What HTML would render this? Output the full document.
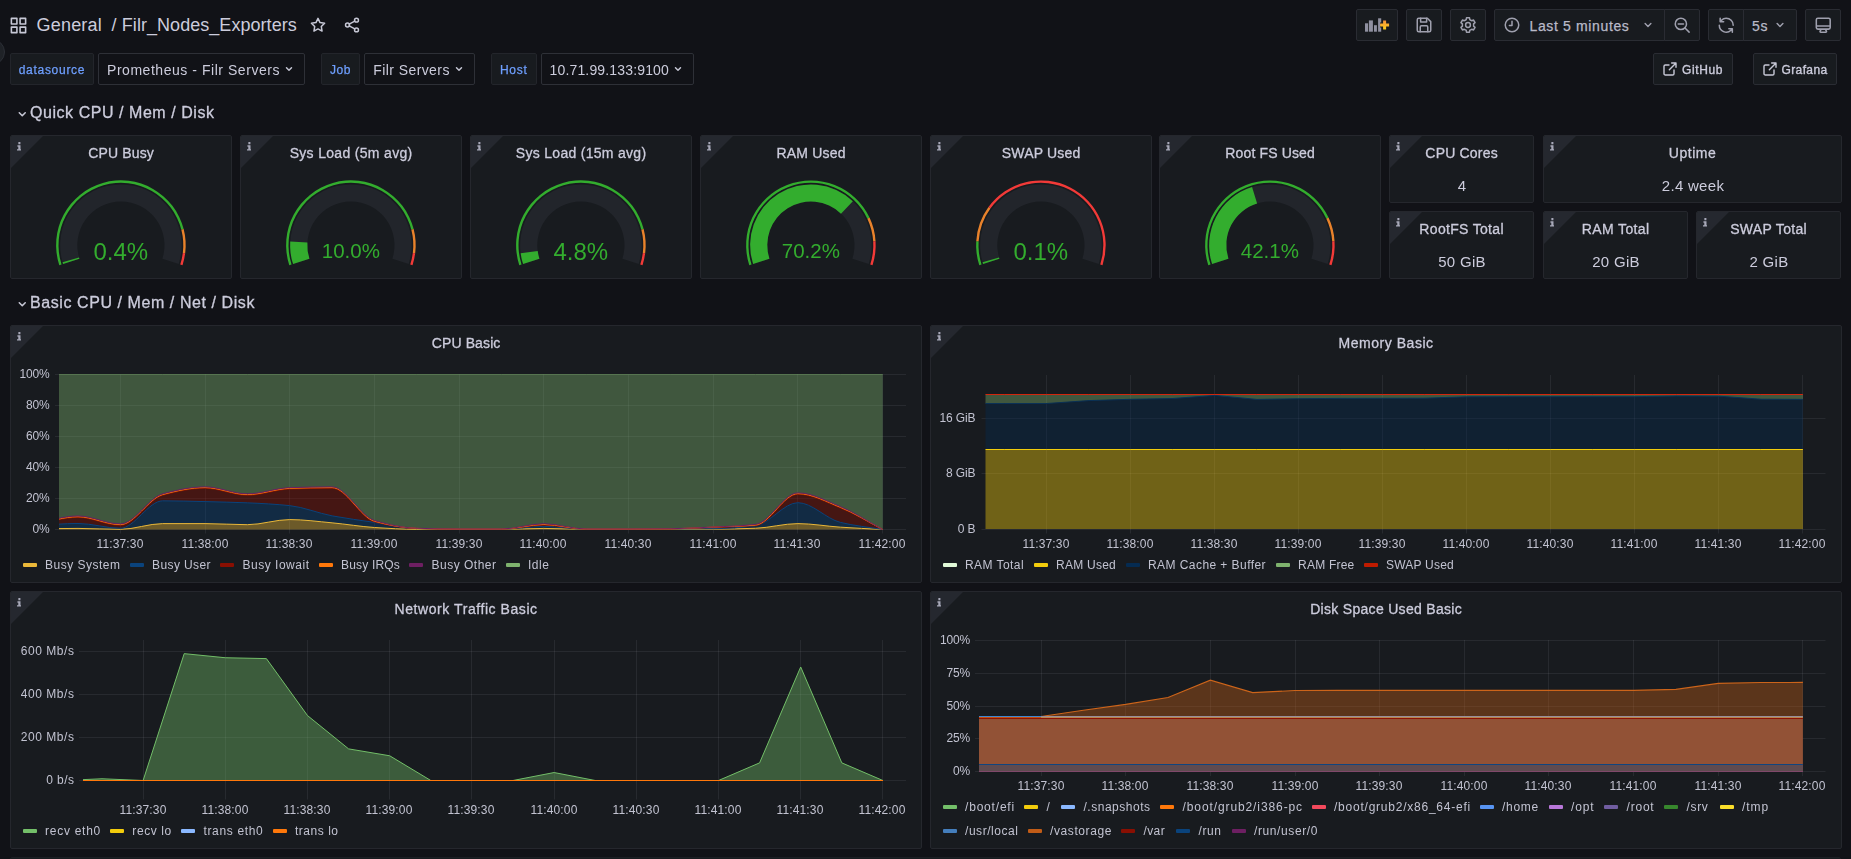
<!DOCTYPE html>
<html lang="en"><head><meta charset="utf-8"><title>Filr_Nodes_Exporters - Grafana</title>
<style>

html,body{margin:0;padding:0}
body{width:1851px;height:859px;overflow:hidden;background:#111217;position:relative;
 font-family:"Liberation Sans",sans-serif;color:#ccccdc;-webkit-font-smoothing:antialiased}
.t{position:absolute;white-space:nowrap;display:block}
.ic{position:absolute;display:block;overflow:visible}
.panel{position:absolute;box-sizing:border-box;background:#181b1f;border:1px solid #25272d;border-radius:2px;overflow:hidden}
.panel svg.plot{position:absolute;left:-1px;top:-1px;display:block}
.corner{position:absolute;left:-1px;top:-1px;width:0;height:0;border-top:34px solid #25282f;border-right:34px solid transparent}
.ci{position:absolute;left:5.600px;top:6.300px;fill:#a8a9b9}
.btn{position:absolute;box-sizing:border-box;background:#181b1f;border:1px solid #2a2c33;border-radius:2px}
.sel{position:absolute;box-sizing:border-box;background:#111217;border:1px solid #2e3037;border-radius:2px}
.lbl{position:absolute;box-sizing:border-box;background:#181b1f;border:1px solid #23252b;border-radius:2px}
.sw{position:absolute;width:14px;height:4px;border-radius:1px}

</style></head><body>
<div style="position:absolute;left:-20.800px;top:39px;width:26px;height:26px;border-radius:50%;box-sizing:border-box;background:#1f2227;border:1px solid #2c2f36"></div>
<div id="nav">
<svg class="ic" style="left:9.40px;top:15.50px" width="19" height="19" viewBox="0 0 24 24" fill="#c7c8d6"><path d="M10,13H3a1,1,0,0,0-1,1v7a1,1,0,0,0,1,1h7a1,1,0,0,0,1-1V14A1,1,0,0,0,10,13ZM9,20H4V15H9ZM21,2H14a1,1,0,0,0-1,1v7a1,1,0,0,0,1,1h7a1,1,0,0,0,1-1V3A1,1,0,0,0,21,2ZM20,9H15V4h5Zm1,4H14a1,1,0,0,0-1,1v7a1,1,0,0,0,1,1h7a1,1,0,0,0,1-1V14A1,1,0,0,0,21,13Zm-1,7H15V15h5ZM10,2H3A1,1,0,0,0,2,3v7a1,1,0,0,0,1,1h7a1,1,0,0,0,1-1V3A1,1,0,0,0,10,2ZM9,9H4V4H9Z"/></svg>
<span class="t" style="left:36.50px;top:13.00px;font-size:18px;line-height:24px;letter-spacing:0.209px;color:#ccccdc;">General</span>
<span class="t" style="left:111.50px;top:13.00px;font-size:18px;line-height:24px;letter-spacing:0.999px;color:#ccccdc;">/</span>
<span class="t" style="left:121.80px;top:13.00px;font-size:18px;line-height:24px;letter-spacing:0.047px;color:#ccccdc;">Filr_Nodes_Exporters</span>
<svg class="ic" style="left:309.10px;top:16.00px" width="18" height="18" viewBox="0 0 24 24" fill="none" stroke="#c7c8d6" stroke-width="2" stroke-linecap="round" stroke-linejoin="round" ><path d="M12 3.2l2.7 5.6 6.1.9-4.4 4.3 1 6.1-5.4-2.9-5.4 2.9 1-6.1-4.4-4.3 6.1-.9z"/></svg>
<svg class="ic" style="left:343.20px;top:16.00px" width="18" height="18" viewBox="0 0 24 24" fill="none" stroke="#c7c8d6" stroke-width="2" stroke-linecap="round" stroke-linejoin="round" ><circle cx="18" cy="5.5" r="2.6"/><circle cx="6" cy="12" r="2.6"/><circle cx="18" cy="18.5" r="2.6"/><path d="M8.3 10.8l7.4-4M8.3 13.2l7.4 4"/></svg>
<div class="btn" style="left:1356px;top:9px;width:42px;height:32px;"></div>
<div class="btn" style="left:1406px;top:9px;width:36px;height:32px;"></div>
<div class="btn" style="left:1450px;top:9px;width:36px;height:32px;"></div>
<div class="btn" style="left:1494px;top:9px;width:171px;height:32px;border-radius:2px 0 0 2px"></div>
<div class="btn" style="left:1664px;top:9px;width:36px;height:32px;border-radius:0 2px 2px 0"></div>
<div class="btn" style="left:1708px;top:9px;width:36px;height:32px;border-radius:2px 0 0 2px"></div>
<div class="btn" style="left:1743px;top:9px;width:54px;height:32px;border-radius:0 2px 2px 0"></div>
<div class="btn" style="left:1805px;top:9px;width:36px;height:32px;"></div>
<svg class="ic" style="left:1356px;top:9px" width="42" height="32" viewBox="1356 9 42 32"><defs><linearGradient id="plusg" x1="0" y1="0" x2="0" y2="1"><stop offset="0" stop-color="#f5903c"/><stop offset="1" stop-color="#fdd01c"/></linearGradient></defs><g fill="#8f90a0"><rect x="1365" y="23.300" width="3.100" height="8.400"/><rect x="1368.900" y="20.400" width="4" height="11.300"/><rect x="1374" y="25.200" width="2.900" height="6.500"/><rect x="1378.100" y="18.300" width="3.100" height="13.400"/></g><path d="M1384.600 20.400v9M1380.100 24.900h9" stroke="#181b1f" stroke-width="5" fill="none"/><path d="M1383.100 20.400h3v3h3v3h-3v3h-3v-3h-3v-3h3z" fill="url(#plusg)"/></svg>
<svg class="ic" style="left:1415.10px;top:16.20px" width="18" height="18" viewBox="0 0 24 24" fill="none" stroke="#9fa0ae" stroke-width="2" stroke-linecap="round" stroke-linejoin="round" ><path d="M5 3h11.5L21 7.5V19a2 2 0 0 1-2 2H5a2 2 0 0 1-2-2V5a2 2 0 0 1 2-2z"/><path d="M7.5 3v5h8V3M7 21v-6.5a1.5 1.5 0 0 1 1.5-1.5h7a1.5 1.5 0 0 1 1.5 1.5V21"/></svg>
<svg class="ic" style="left:1459.00px;top:16.10px" width="18" height="18" viewBox="0 0 24 24" fill="none" stroke="#9fa0ae" stroke-width="2" stroke-linecap="round" stroke-linejoin="round" ><circle cx="12" cy="12" r="3.2"/><path d="M19.4 13.5a7.6 7.6 0 0 0 0-3l2-1.6-2-3.5-2.4 1a7.6 7.6 0 0 0-2.6-1.5L14 2.4h-4l-.4 2.5A7.6 7.6 0 0 0 7 6.4l-2.4-1-2 3.5 2 1.6a7.6 7.6 0 0 0 0 3l-2 1.6 2 3.5 2.4-1a7.6 7.6 0 0 0 2.600 1.5l.4 2.5h4l.4-2.5a7.6 7.6 0 0 0 2.600-1.5l2.4 1 2-3.500z"/></svg>
<svg class="ic" style="left:1502.90px;top:16.00px" width="18" height="18" viewBox="0 0 24 24" fill="none" stroke="#9fa0ae" stroke-width="2" stroke-linecap="round" stroke-linejoin="round" ><circle cx="12" cy="12" r="9"/><path d="M12 7v5.5H8.500"/></svg>
<span class="t" style="left:1529.50px;top:16.50px;font-size:14px;line-height:18px;letter-spacing:0.639px;color:#b9bac8;-webkit-text-stroke:0.250px #b9bac8;">Last 5 minutes</span>
<svg class="ic" style="left:1639.90px;top:17.10px" width="16" height="16" viewBox="0 0 24 24" fill="none" stroke="#9fa0ae" stroke-width="2.2" stroke-linecap="round" stroke-linejoin="round" ><path d="M7.700 9.900l4.300 4.200 4.300-4.200"/></svg>
<svg class="ic" style="left:1673.00px;top:16.00px" width="18" height="18" viewBox="0 0 24 24" fill="none" stroke="#9fa0ae" stroke-width="2" stroke-linecap="round" stroke-linejoin="round" ><circle cx="10.5" cy="10.5" r="7.5"/><path d="M16 16l5.500 5.500M7 10.500h7"/></svg>
<svg class="ic" style="left:1716.65px;top:15.55px" width="18.5" height="18.5" viewBox="0 0 24 24" fill="#9fa0ae"><path d="M19.91,15.51H15.38a1,1,0,0,0,0,2h2.4A8,8,0,0,1,4,12a1,1,0,0,0-2,0,10,10,0,0,0,16.88,7.23V21a1,1,0,0,0,2,0V16.5A1,1,0,0,0,19.91,15.51ZM12,2A10,10,0,0,0,5.120,4.770V3a1,1,0,0,0-2,0V7.500a1,1,0,0,0,1,1h4.500a1,1,0,0,0,0-2H6.220A8,8,0,0,1,20,12a1,1,0,0,0,2,0A10,10,0,0,0,12,2Z"/></svg>
<span class="t" style="left:1752.00px;top:16.50px;font-size:14px;line-height:18px;letter-spacing:0.607px;color:#b9bac8;-webkit-text-stroke:0.250px #b9bac8;">5s</span>
<svg class="ic" style="left:1772.20px;top:17.10px" width="16" height="16" viewBox="0 0 24 24" fill="none" stroke="#9fa0ae" stroke-width="2.2" stroke-linecap="round" stroke-linejoin="round" ><path d="M7.700 9.900l4.300 4.200 4.300-4.200"/></svg>
<svg class="ic" style="left:1813.75px;top:15.55px" width="18.5" height="18.5" viewBox="0 0 24 24" fill="#9fa0ae"><path d="M19,2H5A3,3,0,0,0,2,5V15a3,3,0,0,0,3,3H7.640l-.580,1a2,2,0,0,0,0,2,2,2,0,0,0,1.750,1h6.460A2,2,0,0,0,17,21a2,2,0,0,0,0-2l-.590-1H19a3,3,0,0,0,3-3V5A3,3,0,0,0,19,2ZM8.770,20,9.910,18h4.170l1.150,2ZM20,15a1,1,0,0,1-1,1H5a1,1,0,0,1-1-1V14H20Zm0-3H4V5A1,1,0,0,1,5,4H19a1,1,0,0,1,1,1Z"/></svg>
</div>
<div id="app" style="position:absolute;left:0;top:0;width:1851px;height:859px;will-change:transform">
<div id="submenu">
<div class="lbl" style="left:10px;top:53px;width:84px;height:32px;"></div>
<span class="t" style="left:18.70px;top:61.50px;font-size:12px;line-height:16px;letter-spacing:0.713px;color:#6e9fff;-webkit-text-stroke:0.250px #6e9fff;">datasource</span>
<div class="sel" style="left:98px;top:53px;width:207px;height:32px;"></div>
<span class="t" style="left:107.00px;top:60.50px;font-size:14px;line-height:18px;letter-spacing:0.541px;color:#ccccdc;">Prometheus - Filr Servers</span>
<svg class="ic" style="left:282.10px;top:62.20px" width="14" height="14" viewBox="0 0 24 24" fill="none" stroke="#c7c8d6" stroke-width="2.5" stroke-linecap="round" stroke-linejoin="round" ><path d="M7.700 9.900l4.300 4.200 4.300-4.200"/></svg>
<div class="lbl" style="left:321px;top:53px;width:39px;height:32px;"></div>
<span class="t" style="left:330.00px;top:61.50px;font-size:12px;line-height:16px;letter-spacing:0.551px;color:#6e9fff;-webkit-text-stroke:0.250px #6e9fff;">Job</span>
<div class="sel" style="left:364px;top:53px;width:111px;height:32px;"></div>
<span class="t" style="left:373.30px;top:60.50px;font-size:14px;line-height:18px;letter-spacing:0.412px;color:#ccccdc;">Filr Servers</span>
<svg class="ic" style="left:452.00px;top:62.20px" width="14" height="14" viewBox="0 0 24 24" fill="none" stroke="#c7c8d6" stroke-width="2.5" stroke-linecap="round" stroke-linejoin="round" ><path d="M7.700 9.900l4.300 4.200 4.300-4.200"/></svg>
<div class="lbl" style="left:491px;top:53px;width:46px;height:32px;"></div>
<span class="t" style="left:500.00px;top:61.50px;font-size:12px;line-height:16px;letter-spacing:0.707px;color:#6e9fff;-webkit-text-stroke:0.250px #6e9fff;">Host</span>
<div class="sel" style="left:541px;top:53px;width:153px;height:32px;"></div>
<span class="t" style="left:549.50px;top:60.50px;font-size:14px;line-height:18px;letter-spacing:0.160px;color:#ccccdc;">10.71.99.133:9100</span>
<svg class="ic" style="left:671.00px;top:62.20px" width="14" height="14" viewBox="0 0 24 24" fill="none" stroke="#c7c8d6" stroke-width="2.5" stroke-linecap="round" stroke-linejoin="round" ><path d="M7.700 9.900l4.300 4.200 4.300-4.200"/></svg>
</div>
<div id="links">
<div class="btn" style="left:1653px;top:53px;width:80px;height:32px;"></div>
<svg class="ic" style="left:1662.00px;top:60.90px" width="16" height="16" viewBox="0 0 24 24" fill="none" stroke="#c7c8d6" stroke-width="2.1" stroke-linecap="round" stroke-linejoin="round" ><path d="M18 13.500V19a2 2 0 0 1-2 2H5a2 2 0 0 1-2-2V8a2 2 0 0 1 2-2h5.500"/><path d="M14.500 3H21v6.500M21 3l-10 10"/></svg>
<span class="t" style="left:1682.00px;top:61.50px;font-size:12px;line-height:16px;letter-spacing:0.609px;color:#ccccdc;-webkit-text-stroke:0.350px #ccccdc;">GitHub</span>
<div class="btn" style="left:1753px;top:53px;width:84px;height:32px;"></div>
<svg class="ic" style="left:1762.00px;top:60.90px" width="16" height="16" viewBox="0 0 24 24" fill="none" stroke="#c7c8d6" stroke-width="2.1" stroke-linecap="round" stroke-linejoin="round" ><path d="M18 13.500V19a2 2 0 0 1-2 2H5a2 2 0 0 1-2-2V8a2 2 0 0 1 2-2h5.500"/><path d="M14.500 3H21v6.500M21 3l-10 10"/></svg>
<span class="t" style="left:1781.50px;top:61.50px;font-size:12px;line-height:16px;letter-spacing:0.377px;color:#ccccdc;-webkit-text-stroke:0.350px #ccccdc;">Grafana</span>
</div>
<svg class="ic" style="left:13.75px;top:105.75px" width="16.5" height="16.5" viewBox="0 0 24 24" fill="none" stroke="#c7c8d6" stroke-width="2.3" stroke-linecap="round" stroke-linejoin="round" ><path d="M7.700 9.900l4.300 4.200 4.300-4.200"/></svg>
<span class="t" style="left:30.00px;top:102.40px;font-size:16px;line-height:22px;letter-spacing:0.547px;color:#ccccdc;-webkit-text-stroke:0.300px #ccccdc;">Quick CPU / Mem / Disk</span>
<svg class="ic" style="left:13.75px;top:295.75px" width="16.5" height="16.5" viewBox="0 0 24 24" fill="none" stroke="#c7c8d6" stroke-width="2.3" stroke-linecap="round" stroke-linejoin="round" ><path d="M7.700 9.900l4.300 4.200 4.300-4.200"/></svg>
<span class="t" style="left:30.00px;top:292.40px;font-size:16px;line-height:22px;letter-spacing:0.574px;color:#ccccdc;-webkit-text-stroke:0.300px #ccccdc;">Basic CPU / Mem / Net / Disk</span>
<div class="panel" style="left:10.00px;top:135px;width:222.00px;height:144px"><div class="corner"></div><svg class="ci" width="4.700" height="8.600" viewBox="0 0 5.500 8.800" preserveAspectRatio="none"><path d="M1.600 0h2.400v2.200h-2.400zM.500 3.300h3.600v4h1.400v1.500h-5.500v-1.500h1.500v-2.500h-1z"/></svg><span class="t" style="left:77.15px;top:8.30px;font-size:14px;line-height:18px;letter-spacing:0.166px;color:#ccccdc;-webkit-text-stroke:0.300px #ccccdc;">CPU Busy</span><svg class="plot" width="222.00" height="144" viewBox="10.00 135 222.00 144"><path d="M63.08,263.99 A60.8,60.8 0 1 1 178.72,263.99 L162.37,258.67 A43.6,43.6 0 1 0 79.43,258.67Z" fill="#22252b"/><path d="M59.27,265.22 A64.8,64.8 0 1 1 183.66,229.08 L181.34,229.68 A62.4,62.4 0 1 0 61.55,264.48Z" fill="#33ad2e"/><path d="M183.66,229.08 A64.8,64.8 0 0 1 185.19,253.32 L182.81,253.02 A62.4,62.4 0 0 0 181.34,229.68Z" fill="#e8822b"/><path d="M185.19,253.32 A64.8,64.8 0 0 1 182.53,265.22 L180.25,264.48 A62.4,62.4 0 0 0 182.81,253.02Z" fill="#f23a38"/><path d="M63.08,263.99 A60.8,60.8 0 0 1 62.54,262.24 L79.05,257.42 A43.6,43.6 0 0 0 79.43,258.67Z" fill="#33ad2e"/></svg><span class="t" style="left:82.45px;top:99.60px;font-size:24px;line-height:32px;letter-spacing:0.000px;color:#33ad2e;">0.4%</span></div>
<div class="panel" style="left:240.00px;top:135px;width:222.00px;height:144px"><div class="corner"></div><svg class="ci" width="4.700" height="8.600" viewBox="0 0 5.500 8.800" preserveAspectRatio="none"><path d="M1.600 0h2.400v2.200h-2.400zM.500 3.300h3.600v4h1.400v1.500h-5.500v-1.500h1.500v-2.500h-1z"/></svg><span class="t" style="left:48.65px;top:8.30px;font-size:14px;line-height:18px;letter-spacing:0.318px;color:#ccccdc;-webkit-text-stroke:0.300px #ccccdc;">Sys Load (5m avg)</span><svg class="plot" width="222.00" height="144" viewBox="240.00 135 222.00 144"><path d="M293.08,263.99 A60.8,60.8 0 1 1 408.72,263.99 L392.37,258.67 A43.6,43.6 0 1 0 309.43,258.67Z" fill="#22252b"/><path d="M289.27,265.22 A64.8,64.8 0 1 1 413.66,229.08 L411.34,229.68 A62.4,62.4 0 1 0 291.55,264.48Z" fill="#33ad2e"/><path d="M413.66,229.08 A64.8,64.8 0 0 1 415.19,253.32 L412.81,253.02 A62.4,62.4 0 0 0 411.34,229.68Z" fill="#e8822b"/><path d="M415.19,253.32 A64.8,64.8 0 0 1 412.53,265.22 L410.25,264.48 A62.4,62.4 0 0 0 412.81,253.02Z" fill="#f23a38"/><path d="M293.08,263.99 A60.8,60.8 0 0 1 290.22,241.38 L307.39,242.46 A43.6,43.6 0 0 0 309.43,258.67Z" fill="#33ad2e"/></svg><span class="t" style="left:80.74px;top:100.70px;font-size:20.5px;line-height:28px;letter-spacing:0.000px;color:#33ad2e;">10.0%</span></div>
<div class="panel" style="left:470.00px;top:135px;width:222.00px;height:144px"><div class="corner"></div><svg class="ci" width="4.700" height="8.600" viewBox="0 0 5.500 8.800" preserveAspectRatio="none"><path d="M1.600 0h2.400v2.200h-2.400zM.500 3.300h3.600v4h1.400v1.500h-5.500v-1.500h1.500v-2.500h-1z"/></svg><span class="t" style="left:44.85px;top:8.30px;font-size:14px;line-height:18px;letter-spacing:0.290px;color:#ccccdc;-webkit-text-stroke:0.300px #ccccdc;">Sys Load (15m avg)</span><svg class="plot" width="222.00" height="144" viewBox="470.00 135 222.00 144"><path d="M523.08,263.99 A60.8,60.8 0 1 1 638.72,263.99 L622.37,258.67 A43.6,43.6 0 1 0 539.43,258.67Z" fill="#22252b"/><path d="M519.27,265.22 A64.8,64.8 0 1 1 643.66,229.08 L641.34,229.68 A62.4,62.4 0 1 0 521.55,264.48Z" fill="#33ad2e"/><path d="M643.66,229.08 A64.8,64.8 0 0 1 645.19,253.32 L642.81,253.02 A62.4,62.4 0 0 0 641.34,229.68Z" fill="#e8822b"/><path d="M645.19,253.32 A64.8,64.8 0 0 1 642.53,265.22 L640.25,264.48 A62.4,62.4 0 0 0 642.81,253.02Z" fill="#f23a38"/><path d="M523.08,263.99 A60.8,60.8 0 0 1 520.64,253.27 L537.69,250.99 A43.6,43.6 0 0 0 539.43,258.67Z" fill="#33ad2e"/></svg><span class="t" style="left:82.45px;top:99.60px;font-size:24px;line-height:32px;letter-spacing:0.000px;color:#33ad2e;">4.8%</span></div>
<div class="panel" style="left:700.00px;top:135px;width:222.00px;height:144px"><div class="corner"></div><svg class="ci" width="4.700" height="8.600" viewBox="0 0 5.500 8.800" preserveAspectRatio="none"><path d="M1.600 0h2.400v2.200h-2.400zM.500 3.300h3.600v4h1.400v1.500h-5.500v-1.500h1.500v-2.500h-1z"/></svg><span class="t" style="left:75.50px;top:8.30px;font-size:14px;line-height:18px;letter-spacing:0.190px;color:#ccccdc;-webkit-text-stroke:0.300px #ccccdc;">RAM Used</span><svg class="plot" width="222.00" height="144" viewBox="700.00 135 222.00 144"><path d="M753.08,263.99 A60.8,60.8 0 1 1 868.72,263.99 L852.37,258.67 A43.6,43.6 0 1 0 769.43,258.67Z" fill="#22252b"/><path d="M749.27,265.22 A64.8,64.8 0 0 1 869.53,217.61 L867.36,218.63 A62.4,62.4 0 0 0 751.55,264.48Z" fill="#33ad2e"/><path d="M869.53,217.61 A64.8,64.8 0 0 1 875.57,241.13 L873.18,241.28 A62.4,62.4 0 0 0 867.36,218.63Z" fill="#e8822b"/><path d="M875.57,241.13 A64.8,64.8 0 0 1 872.53,265.22 L870.25,264.48 A62.4,62.4 0 0 0 873.18,241.28Z" fill="#f23a38"/><path d="M753.08,263.99 A60.8,60.8 0 0 1 852.85,201.19 L840.99,213.64 A43.6,43.6 0 0 0 769.43,258.67Z" fill="#33ad2e"/></svg><span class="t" style="left:80.74px;top:100.70px;font-size:20.5px;line-height:28px;letter-spacing:0.000px;color:#33ad2e;">70.2%</span></div>
<div class="panel" style="left:930.00px;top:135px;width:222.00px;height:144px"><div class="corner"></div><svg class="ci" width="4.700" height="8.600" viewBox="0 0 5.500 8.800" preserveAspectRatio="none"><path d="M1.600 0h2.400v2.200h-2.400zM.500 3.300h3.600v4h1.400v1.500h-5.500v-1.500h1.500v-2.500h-1z"/></svg><span class="t" style="left:70.75px;top:8.30px;font-size:14px;line-height:18px;letter-spacing:0.186px;color:#ccccdc;-webkit-text-stroke:0.300px #ccccdc;">SWAP Used</span><svg class="plot" width="222.00" height="144" viewBox="930.00 135 222.00 144"><path d="M983.08,263.99 A60.8,60.8 0 1 1 1098.72,263.99 L1082.37,258.67 A43.6,43.6 0 1 0 999.43,258.67Z" fill="#22252b"/><path d="M979.27,265.22 A64.8,64.8 0 0 1 976.23,241.13 L978.62,241.28 A62.4,62.4 0 0 0 981.55,264.48Z" fill="#33ad2e"/><path d="M976.23,241.13 A64.8,64.8 0 0 1 988.48,207.11 L990.42,208.52 A62.4,62.4 0 0 0 978.62,241.28Z" fill="#e8822b"/><path d="M988.48,207.11 A64.8,64.8 0 0 1 1102.53,265.22 L1100.25,264.48 A62.4,62.4 0 0 0 990.42,208.52Z" fill="#f23a38"/><path d="M983.08,263.99 A60.8,60.8 0 0 1 982.54,262.24 L999.05,257.42 A43.6,43.6 0 0 0 999.43,258.67Z" fill="#33ad2e"/></svg><span class="t" style="left:82.45px;top:99.60px;font-size:24px;line-height:32px;letter-spacing:0.000px;color:#33ad2e;">0.1%</span></div>
<div class="panel" style="left:1159.00px;top:135px;width:222.00px;height:144px"><div class="corner"></div><svg class="ci" width="4.700" height="8.600" viewBox="0 0 5.500 8.800" preserveAspectRatio="none"><path d="M1.600 0h2.400v2.200h-2.400zM.500 3.300h3.600v4h1.400v1.500h-5.500v-1.500h1.500v-2.500h-1z"/></svg><span class="t" style="left:65.30px;top:8.30px;font-size:14px;line-height:18px;letter-spacing:0.140px;color:#ccccdc;-webkit-text-stroke:0.300px #ccccdc;">Root FS Used</span><svg class="plot" width="222.00" height="144" viewBox="1159.00 135 222.00 144"><path d="M1212.08,263.99 A60.8,60.8 0 1 1 1327.72,263.99 L1311.37,258.67 A43.6,43.6 0 1 0 1228.43,258.67Z" fill="#22252b"/><path d="M1208.27,265.22 A64.8,64.8 0 0 1 1328.53,217.61 L1326.36,218.63 A62.4,62.4 0 0 0 1210.55,264.48Z" fill="#33ad2e"/><path d="M1328.53,217.61 A64.8,64.8 0 0 1 1334.57,241.13 L1332.18,241.28 A62.4,62.4 0 0 0 1326.36,218.63Z" fill="#e8822b"/><path d="M1334.57,241.13 A64.8,64.8 0 0 1 1331.53,265.22 L1329.25,264.48 A62.4,62.4 0 0 0 1332.18,241.28Z" fill="#f23a38"/><path d="M1212.08,263.99 A60.8,60.8 0 0 1 1252.06,187.08 L1257.11,203.52 A43.6,43.6 0 0 0 1228.43,258.67Z" fill="#33ad2e"/></svg><span class="t" style="left:80.74px;top:100.70px;font-size:20.5px;line-height:28px;letter-spacing:0.000px;color:#33ad2e;">42.1%</span></div>
<div class="panel" style="left:1389.00px;top:135px;width:145.00px;height:68px"><div class="corner"></div><svg class="ci" width="4.700" height="8.600" viewBox="0 0 5.500 8.800" preserveAspectRatio="none"><path d="M1.600 0h2.400v2.200h-2.400zM.500 3.300h3.600v4h1.400v1.500h-5.500v-1.500h1.500v-2.500h-1z"/></svg><span class="t" style="left:35.35px;top:8.30px;font-size:14px;line-height:18px;letter-spacing:0.190px;color:#ccccdc;-webkit-text-stroke:0.300px #ccccdc;">CPU Cores</span><span class="t" style="left:67.66px;top:40.40px;font-size:15px;line-height:20px;letter-spacing:0.334px;color:#ccccdc;">4</span></div>
<div class="panel" style="left:1543.00px;top:135px;width:299.00px;height:68px"><div class="corner"></div><svg class="ci" width="4.700" height="8.600" viewBox="0 0 5.500 8.800" preserveAspectRatio="none"><path d="M1.600 0h2.400v2.200h-2.400zM.500 3.300h3.600v4h1.400v1.500h-5.500v-1.500h1.500v-2.500h-1z"/></svg><span class="t" style="left:124.80px;top:8.30px;font-size:14px;line-height:18px;letter-spacing:0.543px;color:#ccccdc;-webkit-text-stroke:0.300px #ccccdc;">Uptime</span><span class="t" style="left:117.78px;top:40.40px;font-size:15px;line-height:20px;letter-spacing:0.300px;color:#ccccdc;">2.4 week</span></div>
<div class="panel" style="left:1389.00px;top:211px;width:145.00px;height:68px"><div class="corner"></div><svg class="ci" width="4.700" height="8.600" viewBox="0 0 5.500 8.800" preserveAspectRatio="none"><path d="M1.600 0h2.400v2.200h-2.400zM.500 3.300h3.600v4h1.400v1.500h-5.500v-1.500h1.500v-2.500h-1z"/></svg><span class="t" style="left:29.35px;top:8.30px;font-size:14px;line-height:18px;letter-spacing:0.319px;color:#ccccdc;-webkit-text-stroke:0.300px #ccccdc;">RootFS Total</span><span class="t" style="left:48.15px;top:40.40px;font-size:15px;line-height:20px;letter-spacing:0.306px;color:#ccccdc;">50 GiB</span></div>
<div class="panel" style="left:1543.00px;top:211px;width:145.00px;height:68px"><div class="corner"></div><svg class="ci" width="4.700" height="8.600" viewBox="0 0 5.500 8.800" preserveAspectRatio="none"><path d="M1.600 0h2.400v2.200h-2.400zM.500 3.300h3.600v4h1.400v1.500h-5.500v-1.500h1.500v-2.500h-1z"/></svg><span class="t" style="left:37.75px;top:8.30px;font-size:14px;line-height:18px;letter-spacing:0.376px;color:#ccccdc;-webkit-text-stroke:0.300px #ccccdc;">RAM Total</span><span class="t" style="left:48.15px;top:40.40px;font-size:15px;line-height:20px;letter-spacing:0.306px;color:#ccccdc;">20 GiB</span></div>
<div class="panel" style="left:1696.00px;top:211px;width:145.00px;height:68px"><div class="corner"></div><svg class="ci" width="4.700" height="8.600" viewBox="0 0 5.500 8.800" preserveAspectRatio="none"><path d="M1.600 0h2.400v2.200h-2.400zM.500 3.300h3.600v4h1.400v1.500h-5.500v-1.500h1.500v-2.500h-1z"/></svg><span class="t" style="left:33.20px;top:8.30px;font-size:14px;line-height:18px;letter-spacing:0.314px;color:#ccccdc;-webkit-text-stroke:0.300px #ccccdc;">SWAP Total</span><span class="t" style="left:52.49px;top:40.40px;font-size:15px;line-height:20px;letter-spacing:0.300px;color:#ccccdc;">2 GiB</span></div>
<div class="panel" style="left:10.00px;top:325px;width:912.00px;height:258px"><div class="corner"></div><svg class="ci" width="4.700" height="8.600" viewBox="0 0 5.500 8.800" preserveAspectRatio="none"><path d="M1.600 0h2.400v2.200h-2.400zM.500 3.300h3.600v4h1.400v1.500h-5.500v-1.500h1.500v-2.500h-1z"/></svg><span class="t" style="left:420.70px;top:8.30px;font-size:14px;line-height:18px;letter-spacing:0.124px;color:#ccccdc;-webkit-text-stroke:0.300px #ccccdc;">CPU Basic</span><svg class="plot" width="912.00" height="258" viewBox="10.00 325 912.00 258" shape-rendering="auto"><defs><clipPath id="clip0_325"><rect x="59" y="374.5" width="847" height="158"/></clipPath></defs><path d="M120.50,374 V533.5 M205.50,374 V533.5 M289.50,374 V533.5 M374.50,374 V533.5 M459.50,374 V533.5 M543.50,374 V533.5 M628.50,374 V533.5 M713.50,374 V533.5 M797.50,374 V533.5 M882.50,374 V533.5 M55,374.5 H906 M55,405.5 H906 M55,436.5 H906 M55,467.5 H906 M55,498.5 H906 M55,529.5 H906 " stroke="rgba(204,204,220,0.085)" stroke-width="1" fill="none"/><g clip-path="url(#clip0_325)"><path d="M35.65,528.88 C49.77,528.73 63.88,528.41 78.00,528.41 C92.12,528.41 106.23,529.35 120.35,529.35 C134.47,529.35 148.58,523.61 162.70,523.61 C176.82,523.61 190.93,523.61 205.05,523.61 C219.17,523.61 233.28,524.70 247.40,524.70 C261.52,524.70 275.63,519.58 289.75,519.58 C303.87,519.58 317.98,521.56 332.10,522.84 C346.22,524.11 360.33,526.60 374.45,527.49 C388.57,528.37 402.68,529.35 416.80,529.35 C430.92,529.35 445.03,529.35 459.15,529.35 C473.27,529.35 487.38,529.35 501.50,529.35 C515.62,529.35 529.73,528.41 543.85,528.41 C557.97,528.41 572.08,529.35 586.20,529.35 C600.32,529.35 614.43,529.35 628.55,529.35 C642.67,529.35 656.78,529.35 670.90,529.35 C685.02,529.35 699.13,529.28 713.25,529.19 C727.37,529.10 741.48,528.78 755.60,528.26 C769.72,527.74 783.83,523.61 797.95,523.61 C812.07,523.61 826.18,526.24 840.30,527.17 C854.42,528.11 868.53,528.73 882.65,529.50 L882.65,529.50 C868.53,529.50 854.42,529.50 840.30,529.50 C826.18,529.50 812.07,529.50 797.95,529.50 C783.83,529.50 769.72,529.50 755.60,529.50 C741.48,529.50 727.37,529.50 713.25,529.50 C699.13,529.50 685.02,529.50 670.90,529.50 C656.78,529.50 642.67,529.50 628.55,529.50 C614.43,529.50 600.32,529.50 586.20,529.50 C572.08,529.50 557.97,529.50 543.85,529.50 C529.73,529.50 515.62,529.50 501.50,529.50 C487.38,529.50 473.27,529.50 459.15,529.50 C445.03,529.50 430.92,529.50 416.80,529.50 C402.68,529.50 388.57,529.50 374.45,529.50 C360.33,529.50 346.22,529.50 332.10,529.50 C317.98,529.50 303.87,529.50 289.75,529.50 C275.63,529.50 261.52,529.50 247.40,529.50 C233.28,529.50 219.17,529.50 205.05,529.50 C190.93,529.50 176.82,529.50 162.70,529.50 C148.58,529.50 134.47,529.50 120.35,529.50 C106.23,529.50 92.12,529.50 78.00,529.50 C63.88,529.50 49.77,529.50 35.65,529.50Z" fill="#EAB839" fill-opacity="0.400"/><path d="M35.65,525.62 C49.77,524.90 63.88,523.46 78.00,523.46 C92.12,523.46 106.23,528.26 120.35,528.26 C134.47,528.26 148.58,500.82 162.70,500.82 C176.82,500.82 190.93,501.28 205.05,501.60 C219.17,501.92 233.28,502.27 247.40,502.84 C261.52,503.41 275.63,504.17 289.75,505.63 C303.87,507.09 317.98,513.21 332.10,515.86 C346.22,518.51 360.33,520.25 374.45,522.37 C388.57,524.49 402.68,528.19 416.80,528.57 C430.92,528.95 445.03,529.19 459.15,529.19 C473.27,529.19 487.38,529.19 501.50,529.19 C515.62,529.19 529.73,526.40 543.85,526.40 C557.97,526.40 572.08,529.19 586.20,529.19 C600.32,529.19 614.43,529.19 628.55,529.19 C642.67,529.19 656.78,529.10 670.90,529.03 C685.02,528.97 699.13,528.91 713.25,528.73 C727.37,528.54 741.48,527.45 755.60,525.62 C769.72,523.80 783.83,502.69 797.95,502.69 C812.07,502.69 826.18,518.88 840.30,522.37 C854.42,525.86 868.53,527.12 882.65,529.50 L882.65,529.50 C868.53,528.73 854.42,528.11 840.30,527.17 C826.18,526.24 812.07,523.61 797.95,523.61 C783.83,523.61 769.72,527.74 755.60,528.26 C741.48,528.78 727.37,529.10 713.25,529.19 C699.13,529.28 685.02,529.35 670.90,529.35 C656.78,529.35 642.67,529.35 628.55,529.35 C614.43,529.35 600.32,529.35 586.20,529.35 C572.08,529.35 557.97,528.41 543.85,528.41 C529.73,528.41 515.62,529.35 501.50,529.35 C487.38,529.35 473.27,529.35 459.15,529.35 C445.03,529.35 430.92,529.35 416.80,529.35 C402.68,529.35 388.57,528.37 374.45,527.49 C360.33,526.60 346.22,524.11 332.10,522.84 C317.98,521.56 303.87,519.58 289.75,519.58 C275.63,519.58 261.52,524.70 247.40,524.70 C233.28,524.70 219.17,523.61 205.05,523.61 C190.93,523.61 176.82,523.61 162.70,523.61 C148.58,523.61 134.47,529.35 120.35,529.35 C106.23,529.35 92.12,528.41 78.00,528.41 C63.88,528.41 49.77,528.73 35.65,528.88Z" fill="#0A437C" fill-opacity="0.400"/><path d="M35.65,524.70 C49.77,522.27 63.88,517.41 78.00,517.41 C92.12,517.41 106.23,525.32 120.35,525.32 C134.47,525.32 148.58,499.02 162.70,495.25 C176.82,491.47 190.93,488.27 205.05,488.27 C219.17,488.27 233.28,495.25 247.40,495.25 C261.52,495.25 275.63,489.50 289.75,489.05 C303.87,488.59 317.98,488.27 332.10,488.27 C346.22,488.27 360.33,518.23 374.45,521.90 C388.57,525.58 402.68,528.07 416.80,528.49 C430.92,528.91 445.03,529.19 459.15,529.19 C473.27,529.19 487.38,529.19 501.50,529.19 C515.62,529.19 529.73,525.16 543.85,525.16 C557.97,525.16 572.08,529.19 586.20,529.19 C600.32,529.19 614.43,529.19 628.55,529.19 C642.67,529.19 656.78,529.09 670.90,528.96 C685.02,528.82 699.13,527.81 713.25,527.25 C727.37,526.70 741.48,526.66 755.60,525.62 C769.72,524.59 783.83,494.31 797.95,494.31 C812.07,494.31 826.18,502.39 840.30,507.95 C854.42,513.52 868.53,522.32 882.65,529.50 L882.65,529.50 C868.53,527.12 854.42,525.86 840.30,522.37 C826.18,518.88 812.07,502.69 797.95,502.69 C783.83,502.69 769.72,523.80 755.60,525.62 C741.48,527.45 727.37,528.54 713.25,528.73 C699.13,528.91 685.02,528.97 670.90,529.03 C656.78,529.10 642.67,529.19 628.55,529.19 C614.43,529.19 600.32,529.19 586.20,529.19 C572.08,529.19 557.97,526.40 543.85,526.40 C529.73,526.40 515.62,529.19 501.50,529.19 C487.38,529.19 473.27,529.19 459.15,529.19 C445.03,529.19 430.92,528.95 416.80,528.57 C402.68,528.19 388.57,524.49 374.45,522.37 C360.33,520.25 346.22,518.51 332.10,515.86 C317.98,513.21 303.87,507.09 289.75,505.63 C275.63,504.17 261.52,503.41 247.40,502.84 C233.28,502.27 219.17,501.92 205.05,501.60 C190.93,501.28 176.82,500.82 162.70,500.82 C148.58,500.82 134.47,528.26 120.35,528.26 C106.23,528.26 92.12,523.46 78.00,523.46 C63.88,523.46 49.77,524.90 35.65,525.62Z" fill="#890F02" fill-opacity="0.400"/><path d="M35.65,524.00 C49.77,521.57 63.88,516.71 78.00,516.71 C92.12,516.71 106.23,524.62 120.35,524.62 C134.47,524.62 148.58,498.32 162.70,494.55 C176.82,490.77 190.93,487.57 205.05,487.57 C219.17,487.57 233.28,494.55 247.40,494.55 C261.52,494.55 275.63,488.81 289.75,488.35 C303.87,487.89 317.98,487.57 332.10,487.57 C346.22,487.57 360.33,517.27 374.45,521.21 C388.57,525.14 402.68,527.90 416.80,528.37 C430.92,528.83 445.03,529.14 459.15,529.14 C473.27,529.14 487.38,529.14 501.50,529.14 C515.62,529.14 529.73,524.46 543.85,524.46 C557.97,524.46 572.08,529.14 586.20,529.14 C600.32,529.14 614.43,529.14 628.55,529.14 C642.67,529.14 656.78,529.01 670.90,528.83 C685.02,528.66 699.13,527.75 713.25,527.13 C727.37,526.51 741.48,526.36 755.60,525.08 C769.72,523.80 783.83,493.62 797.95,493.62 C812.07,493.62 826.18,501.62 840.30,507.26 C854.42,512.89 868.53,522.09 882.65,529.50 L882.65,529.50 C868.53,522.32 854.42,513.52 840.30,507.95 C826.18,502.39 812.07,494.31 797.95,494.31 C783.83,494.31 769.72,524.59 755.60,525.62 C741.48,526.66 727.37,526.70 713.25,527.25 C699.13,527.81 685.02,528.82 670.90,528.96 C656.78,529.09 642.67,529.19 628.55,529.19 C614.43,529.19 600.32,529.19 586.20,529.19 C572.08,529.19 557.97,525.16 543.85,525.16 C529.73,525.16 515.62,529.19 501.50,529.19 C487.38,529.19 473.27,529.19 459.15,529.19 C445.03,529.19 430.92,528.91 416.80,528.49 C402.68,528.07 388.57,525.58 374.45,521.90 C360.33,518.23 346.22,488.27 332.10,488.27 C317.98,488.27 303.87,488.59 289.75,489.05 C275.63,489.50 261.52,495.25 247.40,495.25 C233.28,495.25 219.17,488.27 205.05,488.27 C190.93,488.27 176.82,491.47 162.70,495.25 C148.58,499.02 134.47,525.32 120.35,525.32 C106.23,525.32 92.12,517.41 78.00,517.41 C63.88,517.41 49.77,522.27 35.65,524.70Z" fill="#FF780A" fill-opacity="0.400"/><path d="M35.65,523.30 C49.77,520.87 63.88,516.01 78.00,516.01 C92.12,516.01 106.23,523.92 120.35,523.92 C134.47,523.92 148.58,497.62 162.70,493.85 C176.82,490.08 190.93,486.88 205.05,486.88 C219.17,486.88 233.28,493.85 247.40,493.85 C261.52,493.85 275.63,488.11 289.75,487.65 C303.87,487.19 317.98,486.88 332.10,486.88 C346.22,486.88 360.33,516.31 374.45,520.51 C388.57,524.71 402.68,527.79 416.80,528.26 C430.92,528.73 445.03,529.03 459.15,529.03 C473.27,529.03 487.38,529.03 501.50,529.03 C515.62,529.03 529.73,523.76 543.85,523.76 C557.97,523.76 572.08,529.03 586.20,529.03 C600.32,529.03 614.43,529.03 628.55,529.03 C642.67,529.03 656.78,528.90 670.90,528.73 C685.02,528.55 699.13,527.71 713.25,527.02 C727.37,526.33 741.48,526.01 755.60,524.38 C769.72,522.76 783.83,492.92 797.95,492.92 C812.07,492.92 826.18,500.86 840.30,506.56 C854.42,512.26 868.53,521.85 882.65,529.50 L882.65,529.50 C868.53,522.09 854.42,512.89 840.30,507.26 C826.18,501.62 812.07,493.62 797.95,493.62 C783.83,493.62 769.72,523.80 755.60,525.08 C741.48,526.36 727.37,526.51 713.25,527.13 C699.13,527.75 685.02,528.66 670.90,528.83 C656.78,529.01 642.67,529.14 628.55,529.14 C614.43,529.14 600.32,529.14 586.20,529.14 C572.08,529.14 557.97,524.46 543.85,524.46 C529.73,524.46 515.62,529.14 501.50,529.14 C487.38,529.14 473.27,529.14 459.15,529.14 C445.03,529.14 430.92,528.83 416.80,528.37 C402.68,527.90 388.57,525.14 374.45,521.21 C360.33,517.27 346.22,487.57 332.10,487.57 C317.98,487.57 303.87,487.89 289.75,488.35 C275.63,488.81 261.52,494.55 247.40,494.55 C233.28,494.55 219.17,487.57 205.05,487.57 C190.93,487.57 176.82,490.77 162.70,494.55 C148.58,498.32 134.47,524.62 120.35,524.62 C106.23,524.62 92.12,516.71 78.00,516.71 C63.88,516.71 49.77,521.57 35.65,524.00Z" fill="#6D1F62" fill-opacity="0.400"/><path d="M35.65,374.50 C49.77,374.50 63.88,374.50 78.00,374.50 C92.12,374.50 106.23,374.50 120.35,374.50 C134.47,374.50 148.58,374.50 162.70,374.50 C176.82,374.50 190.93,374.50 205.05,374.50 C219.17,374.50 233.28,374.50 247.40,374.50 C261.52,374.50 275.63,374.50 289.75,374.50 C303.87,374.50 317.98,374.50 332.10,374.50 C346.22,374.50 360.33,374.50 374.45,374.50 C388.57,374.50 402.68,374.50 416.80,374.50 C430.92,374.50 445.03,374.50 459.15,374.50 C473.27,374.50 487.38,374.50 501.50,374.50 C515.62,374.50 529.73,374.50 543.85,374.50 C557.97,374.50 572.08,374.50 586.20,374.50 C600.32,374.50 614.43,374.50 628.55,374.50 C642.67,374.50 656.78,374.50 670.90,374.50 C685.02,374.50 699.13,374.50 713.25,374.50 C727.37,374.50 741.48,374.50 755.60,374.50 C769.72,374.50 783.83,374.50 797.95,374.50 C812.07,374.50 826.18,374.50 840.30,374.50 C854.42,374.50 868.53,374.50 882.65,374.50 L882.65,529.50 C868.53,521.85 854.42,512.26 840.30,506.56 C826.18,500.86 812.07,492.92 797.95,492.92 C783.83,492.92 769.72,522.76 755.60,524.38 C741.48,526.01 727.37,526.33 713.25,527.02 C699.13,527.71 685.02,528.55 670.90,528.73 C656.78,528.90 642.67,529.03 628.55,529.03 C614.43,529.03 600.32,529.03 586.20,529.03 C572.08,529.03 557.97,523.76 543.85,523.76 C529.73,523.76 515.62,529.03 501.50,529.03 C487.38,529.03 473.27,529.03 459.15,529.03 C445.03,529.03 430.92,528.73 416.80,528.26 C402.68,527.79 388.57,524.71 374.45,520.51 C360.33,516.31 346.22,486.88 332.10,486.88 C317.98,486.88 303.87,487.19 289.75,487.65 C275.63,488.11 261.52,493.85 247.40,493.85 C233.28,493.85 219.17,486.88 205.05,486.88 C190.93,486.88 176.82,490.08 162.70,493.85 C148.58,497.62 134.47,523.92 120.35,523.92 C106.23,523.92 92.12,516.01 78.00,516.01 C63.88,516.01 49.77,520.87 35.65,523.30Z" fill="#7EB26D" fill-opacity="0.400"/><path d="M35.65,528.88 C49.77,528.73 63.88,528.41 78.00,528.41 C92.12,528.41 106.23,529.35 120.35,529.35 C134.47,529.35 148.58,523.61 162.70,523.61 C176.82,523.61 190.93,523.61 205.05,523.61 C219.17,523.61 233.28,524.70 247.40,524.70 C261.52,524.70 275.63,519.58 289.75,519.58 C303.87,519.58 317.98,521.56 332.10,522.84 C346.22,524.11 360.33,526.60 374.45,527.49 C388.57,528.37 402.68,529.35 416.80,529.35 C430.92,529.35 445.03,529.35 459.15,529.35 C473.27,529.35 487.38,529.35 501.50,529.35 C515.62,529.35 529.73,528.41 543.85,528.41 C557.97,528.41 572.08,529.35 586.20,529.35 C600.32,529.35 614.43,529.35 628.55,529.35 C642.67,529.35 656.78,529.35 670.90,529.35 C685.02,529.35 699.13,529.28 713.25,529.19 C727.37,529.10 741.48,528.78 755.60,528.26 C769.72,527.74 783.83,523.61 797.95,523.61 C812.07,523.61 826.18,526.24 840.30,527.17 C854.42,528.11 868.53,528.73 882.65,529.50" fill="none" stroke="#EAB839" stroke-width="1"/><path d="M35.65,525.62 C49.77,524.90 63.88,523.46 78.00,523.46 C92.12,523.46 106.23,528.26 120.35,528.26 C134.47,528.26 148.58,500.82 162.70,500.82 C176.82,500.82 190.93,501.28 205.05,501.60 C219.17,501.92 233.28,502.27 247.40,502.84 C261.52,503.41 275.63,504.17 289.75,505.63 C303.87,507.09 317.98,513.21 332.10,515.86 C346.22,518.51 360.33,520.25 374.45,522.37 C388.57,524.49 402.68,528.19 416.80,528.57 C430.92,528.95 445.03,529.19 459.15,529.19 C473.27,529.19 487.38,529.19 501.50,529.19 C515.62,529.19 529.73,526.40 543.85,526.40 C557.97,526.40 572.08,529.19 586.20,529.19 C600.32,529.19 614.43,529.19 628.55,529.19 C642.67,529.19 656.78,529.10 670.90,529.03 C685.02,528.97 699.13,528.91 713.25,528.73 C727.37,528.54 741.48,527.45 755.60,525.62 C769.72,523.80 783.83,502.69 797.95,502.69 C812.07,502.69 826.18,518.88 840.30,522.37 C854.42,525.86 868.53,527.12 882.65,529.50" fill="none" stroke="#0A437C" stroke-width="1"/><path d="M35.65,524.70 C49.77,522.27 63.88,517.41 78.00,517.41 C92.12,517.41 106.23,525.32 120.35,525.32 C134.47,525.32 148.58,499.02 162.70,495.25 C176.82,491.47 190.93,488.27 205.05,488.27 C219.17,488.27 233.28,495.25 247.40,495.25 C261.52,495.25 275.63,489.50 289.75,489.05 C303.87,488.59 317.98,488.27 332.10,488.27 C346.22,488.27 360.33,518.23 374.45,521.90 C388.57,525.58 402.68,528.07 416.80,528.49 C430.92,528.91 445.03,529.19 459.15,529.19 C473.27,529.19 487.38,529.19 501.50,529.19 C515.62,529.19 529.73,525.16 543.85,525.16 C557.97,525.16 572.08,529.19 586.20,529.19 C600.32,529.19 614.43,529.19 628.55,529.19 C642.67,529.19 656.78,529.09 670.90,528.96 C685.02,528.82 699.13,527.81 713.25,527.25 C727.37,526.70 741.48,526.66 755.60,525.62 C769.72,524.59 783.83,494.31 797.95,494.31 C812.07,494.31 826.18,502.39 840.30,507.95 C854.42,513.52 868.53,522.32 882.65,529.50" fill="none" stroke="#890F02" stroke-width="1"/><path d="M35.65,524.00 C49.77,521.57 63.88,516.71 78.00,516.71 C92.12,516.71 106.23,524.62 120.35,524.62 C134.47,524.62 148.58,498.32 162.70,494.55 C176.82,490.77 190.93,487.57 205.05,487.57 C219.17,487.57 233.28,494.55 247.40,494.55 C261.52,494.55 275.63,488.81 289.75,488.35 C303.87,487.89 317.98,487.57 332.10,487.57 C346.22,487.57 360.33,517.27 374.45,521.21 C388.57,525.14 402.68,527.90 416.80,528.37 C430.92,528.83 445.03,529.14 459.15,529.14 C473.27,529.14 487.38,529.14 501.50,529.14 C515.62,529.14 529.73,524.46 543.85,524.46 C557.97,524.46 572.08,529.14 586.20,529.14 C600.32,529.14 614.43,529.14 628.55,529.14 C642.67,529.14 656.78,529.01 670.90,528.83 C685.02,528.66 699.13,527.75 713.25,527.13 C727.37,526.51 741.48,526.36 755.60,525.08 C769.72,523.80 783.83,493.62 797.95,493.62 C812.07,493.62 826.18,501.62 840.30,507.26 C854.42,512.89 868.53,522.09 882.65,529.50" fill="none" stroke="#FF780A" stroke-width="1"/><path d="M35.65,523.30 C49.77,520.87 63.88,516.01 78.00,516.01 C92.12,516.01 106.23,523.92 120.35,523.92 C134.47,523.92 148.58,497.62 162.70,493.85 C176.82,490.08 190.93,486.88 205.05,486.88 C219.17,486.88 233.28,493.85 247.40,493.85 C261.52,493.85 275.63,488.11 289.75,487.65 C303.87,487.19 317.98,486.88 332.10,486.88 C346.22,486.88 360.33,516.31 374.45,520.51 C388.57,524.71 402.68,527.79 416.80,528.26 C430.92,528.73 445.03,529.03 459.15,529.03 C473.27,529.03 487.38,529.03 501.50,529.03 C515.62,529.03 529.73,523.76 543.85,523.76 C557.97,523.76 572.08,529.03 586.20,529.03 C600.32,529.03 614.43,529.03 628.55,529.03 C642.67,529.03 656.78,528.90 670.90,528.73 C685.02,528.55 699.13,527.71 713.25,527.02 C727.37,526.33 741.48,526.01 755.60,524.38 C769.72,522.76 783.83,492.92 797.95,492.92 C812.07,492.92 826.18,500.86 840.30,506.56 C854.42,512.26 868.53,521.85 882.65,529.50" fill="none" stroke="#6D1F62" stroke-width="1"/><path d="M35.65,374.50 C49.77,374.50 63.88,374.50 78.00,374.50 C92.12,374.50 106.23,374.50 120.35,374.50 C134.47,374.50 148.58,374.50 162.70,374.50 C176.82,374.50 190.93,374.50 205.05,374.50 C219.17,374.50 233.28,374.50 247.40,374.50 C261.52,374.50 275.63,374.50 289.75,374.50 C303.87,374.50 317.98,374.50 332.10,374.50 C346.22,374.50 360.33,374.50 374.45,374.50 C388.57,374.50 402.68,374.50 416.80,374.50 C430.92,374.50 445.03,374.50 459.15,374.50 C473.27,374.50 487.38,374.50 501.50,374.50 C515.62,374.50 529.73,374.50 543.85,374.50 C557.97,374.50 572.08,374.50 586.20,374.50 C600.32,374.50 614.43,374.50 628.55,374.50 C642.67,374.50 656.78,374.50 670.90,374.50 C685.02,374.50 699.13,374.50 713.25,374.50 C727.37,374.50 741.48,374.50 755.60,374.50 C769.72,374.50 783.83,374.50 797.95,374.50 C812.07,374.50 826.18,374.50 840.30,374.50 C854.42,374.50 868.53,374.50 882.65,374.50" fill="none" stroke="#7EB26D" stroke-width="1"/></g></svg><span class="t" style="left:8.42px;top:39.50px;font-size:12px;line-height:16px;letter-spacing:-0.153px;color:#c2c3d1;">100%</span><span class="t" style="left:14.96px;top:70.50px;font-size:12px;line-height:16px;letter-spacing:-0.160px;color:#c2c3d1;">80%</span><span class="t" style="left:14.96px;top:101.50px;font-size:12px;line-height:16px;letter-spacing:-0.160px;color:#c2c3d1;">60%</span><span class="t" style="left:14.96px;top:132.50px;font-size:12px;line-height:16px;letter-spacing:-0.160px;color:#c2c3d1;">40%</span><span class="t" style="left:14.96px;top:163.50px;font-size:12px;line-height:16px;letter-spacing:-0.160px;color:#c2c3d1;">20%</span><span class="t" style="left:21.50px;top:194.50px;font-size:12px;line-height:16px;letter-spacing:-0.173px;color:#c2c3d1;">0%</span><span class="t" style="left:85.50px;top:209.50px;font-size:12px;line-height:16px;letter-spacing:0.147px;color:#c2c3d1;">11:37:30</span><span class="t" style="left:170.50px;top:209.50px;font-size:12px;line-height:16px;letter-spacing:0.147px;color:#c2c3d1;">11:38:00</span><span class="t" style="left:254.50px;top:209.50px;font-size:12px;line-height:16px;letter-spacing:0.147px;color:#c2c3d1;">11:38:30</span><span class="t" style="left:339.50px;top:209.50px;font-size:12px;line-height:16px;letter-spacing:0.147px;color:#c2c3d1;">11:39:00</span><span class="t" style="left:424.50px;top:209.50px;font-size:12px;line-height:16px;letter-spacing:0.147px;color:#c2c3d1;">11:39:30</span><span class="t" style="left:508.50px;top:209.50px;font-size:12px;line-height:16px;letter-spacing:0.147px;color:#c2c3d1;">11:40:00</span><span class="t" style="left:593.50px;top:209.50px;font-size:12px;line-height:16px;letter-spacing:0.147px;color:#c2c3d1;">11:40:30</span><span class="t" style="left:678.50px;top:209.50px;font-size:12px;line-height:16px;letter-spacing:0.147px;color:#c2c3d1;">11:41:00</span><span class="t" style="left:762.50px;top:209.50px;font-size:12px;line-height:16px;letter-spacing:0.147px;color:#c2c3d1;">11:41:30</span><span class="t" style="left:847.50px;top:209.50px;font-size:12px;line-height:16px;letter-spacing:0.147px;color:#c2c3d1;">11:42:00</span><span class="sw" style="left:11.80px;top:237.00px;background:#EAB839"></span><span class="t" style="left:34.00px;top:231.20px;font-size:12px;line-height:16px;letter-spacing:0.498px;color:#c2c3d1;">Busy System</span><span class="sw" style="left:118.80px;top:237.00px;background:#0A437C"></span><span class="t" style="left:141.00px;top:231.20px;font-size:12px;line-height:16px;letter-spacing:0.406px;color:#c2c3d1;">Busy User</span><span class="sw" style="left:209.30px;top:237.00px;background:#890F02"></span><span class="t" style="left:231.50px;top:231.20px;font-size:12px;line-height:16px;letter-spacing:0.513px;color:#c2c3d1;">Busy Iowait</span><span class="sw" style="left:307.80px;top:237.00px;background:#FF780A"></span><span class="t" style="left:330.00px;top:231.20px;font-size:12px;line-height:16px;letter-spacing:0.184px;color:#c2c3d1;">Busy IRQs</span><span class="sw" style="left:398.30px;top:237.00px;background:#6D1F62"></span><span class="t" style="left:420.50px;top:231.20px;font-size:12px;line-height:16px;letter-spacing:0.498px;color:#c2c3d1;">Busy Other</span><span class="sw" style="left:494.80px;top:237.00px;background:#7EB26D"></span><span class="t" style="left:517.00px;top:231.20px;font-size:12px;line-height:16px;letter-spacing:0.538px;color:#c2c3d1;">Idle</span></div>
<div class="panel" style="left:930.00px;top:325px;width:912.00px;height:258px"><div class="corner"></div><svg class="ci" width="4.700" height="8.600" viewBox="0 0 5.500 8.800" preserveAspectRatio="none"><path d="M1.600 0h2.400v2.200h-2.400zM.500 3.300h3.600v4h1.400v1.500h-5.500v-1.500h1.500v-2.500h-1z"/></svg><span class="t" style="left:407.60px;top:8.30px;font-size:14px;line-height:18px;letter-spacing:0.526px;color:#ccccdc;-webkit-text-stroke:0.300px #ccccdc;">Memory Basic</span><svg class="plot" width="912.00" height="258" viewBox="930.00 325 912.00 258" shape-rendering="auto"><defs><clipPath id="clip12_325"><rect x="985.5" y="375.5" width="840.0" height="157"/></clipPath></defs><path d="M1046.50,375 V533.5 M1130.50,375 V533.5 M1214.50,375 V533.5 M1298.50,375 V533.5 M1382.50,375 V533.5 M1466.50,375 V533.5 M1550.50,375 V533.5 M1634.50,375 V533.5 M1718.50,375 V533.5 M1802.50,375 V533.5 M981.5,418.5 H1825.5 M981.5,473.5 H1825.5 M981.5,529.5 H1825.5 " stroke="rgba(204,204,220,0.085)" stroke-width="1" fill="none"/><g clip-path="url(#clip12_325)"><path d="M962.90,449.50 L1004.90,449.50 L1046.90,449.50 L1088.90,449.50 L1130.90,449.50 L1172.90,449.50 L1214.90,449.50 L1256.90,449.50 L1298.90,449.50 L1340.90,449.50 L1382.90,449.50 L1424.90,449.50 L1466.90,449.50 L1508.90,449.50 L1550.90,449.50 L1592.90,449.50 L1634.90,449.50 L1676.90,449.50 L1718.90,449.50 L1760.90,449.50 L1802.90,449.50 L1802.90,529.00 L1760.90,529.00 L1718.90,529.00 L1676.90,529.00 L1634.90,529.00 L1592.90,529.00 L1550.90,529.00 L1508.90,529.00 L1466.90,529.00 L1424.90,529.00 L1382.90,529.00 L1340.90,529.00 L1298.90,529.00 L1256.90,529.00 L1214.90,529.00 L1172.90,529.00 L1130.90,529.00 L1088.90,529.00 L1046.90,529.00 L1004.90,529.00 L962.90,529.00Z" fill="#F2CC0C" fill-opacity="0.405"/><path d="M962.90,403.50 L1004.90,403.50 L1046.90,403.50 L1088.90,400.60 L1130.90,399.30 L1172.90,398.50 L1214.90,395.40 L1256.90,399.40 L1298.90,398.70 L1340.90,398.40 L1382.90,398.30 L1424.90,398.20 L1466.90,396.80 L1508.90,396.70 L1550.90,396.70 L1592.90,396.70 L1634.90,396.70 L1676.90,396.00 L1718.90,396.20 L1760.90,399.20 L1802.90,399.40 L1802.90,449.50 L1760.90,449.50 L1718.90,449.50 L1676.90,449.50 L1634.90,449.50 L1592.90,449.50 L1550.90,449.50 L1508.90,449.50 L1466.90,449.50 L1424.90,449.50 L1382.90,449.50 L1340.90,449.50 L1298.90,449.50 L1256.90,449.50 L1214.90,449.50 L1172.90,449.50 L1130.90,449.50 L1088.90,449.50 L1046.90,449.50 L1004.90,449.50 L962.90,449.50Z" fill="#052B51" fill-opacity="0.400"/><path d="M962.90,394.50 L1004.90,394.50 L1046.90,394.50 L1088.90,394.50 L1130.90,394.50 L1172.90,394.50 L1214.90,394.50 L1256.90,394.50 L1298.90,394.50 L1340.90,394.50 L1382.90,394.50 L1424.90,394.50 L1466.90,394.50 L1508.90,394.50 L1550.90,394.50 L1592.90,394.50 L1634.90,394.50 L1676.90,394.50 L1718.90,394.50 L1760.90,394.50 L1802.90,394.50 L1802.90,399.40 L1760.90,399.20 L1718.90,396.20 L1676.90,396.00 L1634.90,396.70 L1592.90,396.70 L1550.90,396.70 L1508.90,396.70 L1466.90,396.80 L1424.90,398.20 L1382.90,398.30 L1340.90,398.40 L1298.90,398.70 L1256.90,399.40 L1214.90,395.40 L1172.90,398.50 L1130.90,399.30 L1088.90,400.60 L1046.90,403.50 L1004.90,403.50 L962.90,403.50Z" fill="#7EB26D" fill-opacity="0.400"/><path d="M962.90,449.50 L1004.90,449.50 L1046.90,449.50 L1088.90,449.50 L1130.90,449.50 L1172.90,449.50 L1214.90,449.50 L1256.90,449.50 L1298.90,449.50 L1340.90,449.50 L1382.90,449.50 L1424.90,449.50 L1466.90,449.50 L1508.90,449.50 L1550.90,449.50 L1592.90,449.50 L1634.90,449.50 L1676.90,449.50 L1718.90,449.50 L1760.90,449.50 L1802.90,449.50" fill="none" stroke="#F2CC0C" stroke-width="1"/><path d="M962.90,403.50 L1004.90,403.50 L1046.90,403.50 L1088.90,400.60 L1130.90,399.30 L1172.90,398.50 L1214.90,395.40 L1256.90,399.40 L1298.90,398.70 L1340.90,398.40 L1382.90,398.30 L1424.90,398.20 L1466.90,396.80 L1508.90,396.70 L1550.90,396.70 L1592.90,396.70 L1634.90,396.70 L1676.90,396.00 L1718.90,396.20 L1760.90,399.20 L1802.90,399.40" fill="none" stroke="#0a3156" stroke-width="1"/><path d="M962.90,394.50 L1004.90,394.50 L1046.90,394.50 L1088.90,394.50 L1130.90,394.50 L1172.90,394.50 L1214.90,394.50 L1256.90,394.50 L1298.90,394.50 L1340.90,394.50 L1382.90,394.50 L1424.90,394.50 L1466.90,394.50 L1508.90,394.50 L1550.90,394.50 L1592.90,394.50 L1634.90,394.50 L1676.90,394.50 L1718.90,394.50 L1760.90,394.50 L1802.90,394.50" fill="none" stroke="#d3260d" stroke-width="1"/></g></svg><span class="t" style="left:8.55px;top:83.90px;font-size:12px;line-height:16px;letter-spacing:-0.122px;color:#c2c3d1;">16 GiB</span><span class="t" style="left:15.09px;top:139.20px;font-size:12px;line-height:16px;letter-spacing:-0.120px;color:#c2c3d1;">8 GiB</span><span class="t" style="left:26.85px;top:194.50px;font-size:12px;line-height:16px;letter-spacing:-0.120px;color:#c2c3d1;">0 B</span><span class="t" style="left:91.50px;top:209.50px;font-size:12px;line-height:16px;letter-spacing:0.147px;color:#c2c3d1;">11:37:30</span><span class="t" style="left:175.50px;top:209.50px;font-size:12px;line-height:16px;letter-spacing:0.147px;color:#c2c3d1;">11:38:00</span><span class="t" style="left:259.50px;top:209.50px;font-size:12px;line-height:16px;letter-spacing:0.147px;color:#c2c3d1;">11:38:30</span><span class="t" style="left:343.50px;top:209.50px;font-size:12px;line-height:16px;letter-spacing:0.147px;color:#c2c3d1;">11:39:00</span><span class="t" style="left:427.50px;top:209.50px;font-size:12px;line-height:16px;letter-spacing:0.147px;color:#c2c3d1;">11:39:30</span><span class="t" style="left:511.50px;top:209.50px;font-size:12px;line-height:16px;letter-spacing:0.147px;color:#c2c3d1;">11:40:00</span><span class="t" style="left:595.50px;top:209.50px;font-size:12px;line-height:16px;letter-spacing:0.147px;color:#c2c3d1;">11:40:30</span><span class="t" style="left:679.50px;top:209.50px;font-size:12px;line-height:16px;letter-spacing:0.147px;color:#c2c3d1;">11:41:00</span><span class="t" style="left:763.50px;top:209.50px;font-size:12px;line-height:16px;letter-spacing:0.147px;color:#c2c3d1;">11:41:30</span><span class="t" style="left:847.50px;top:209.50px;font-size:12px;line-height:16px;letter-spacing:0.147px;color:#c2c3d1;">11:42:00</span><span class="sw" style="left:11.80px;top:237.00px;background:#E0F9D7"></span><span class="t" style="left:34.00px;top:231.20px;font-size:12px;line-height:16px;letter-spacing:0.430px;color:#c2c3d1;">RAM Total</span><span class="sw" style="left:102.80px;top:237.00px;background:#F2CC0C"></span><span class="t" style="left:125.00px;top:231.20px;font-size:12px;line-height:16px;letter-spacing:0.248px;color:#c2c3d1;">RAM Used</span><span class="sw" style="left:194.80px;top:237.00px;background:#052B51"></span><span class="t" style="left:217.00px;top:231.20px;font-size:12px;line-height:16px;letter-spacing:0.435px;color:#c2c3d1;">RAM Cache + Buffer</span><span class="sw" style="left:344.80px;top:237.00px;background:#7EB26D"></span><span class="t" style="left:367.00px;top:231.20px;font-size:12px;line-height:16px;letter-spacing:0.228px;color:#c2c3d1;">RAM Free</span><span class="sw" style="left:432.80px;top:237.00px;background:#BF1B00"></span><span class="t" style="left:455.00px;top:231.20px;font-size:12px;line-height:16px;letter-spacing:0.220px;color:#c2c3d1;">SWAP Used</span></div>
<div class="panel" style="left:10.00px;top:591px;width:912.00px;height:258px"><div class="corner"></div><svg class="ci" width="4.700" height="8.600" viewBox="0 0 5.500 8.800" preserveAspectRatio="none"><path d="M1.600 0h2.400v2.200h-2.400zM.500 3.300h3.600v4h1.400v1.500h-5.500v-1.500h1.500v-2.500h-1z"/></svg><span class="t" style="left:383.50px;top:8.30px;font-size:14px;line-height:18px;letter-spacing:0.570px;color:#ccccdc;-webkit-text-stroke:0.300px #ccccdc;">Network Traffic Basic</span><svg class="plot" width="912.00" height="258" viewBox="10.00 591 912.00 258" shape-rendering="auto"><defs><clipPath id="clip0_591"><rect x="83" y="640.5" width="823" height="158"/></clipPath></defs><path d="M143.50,640 V799.5 M225.50,640 V799.5 M307.50,640 V799.5 M389.50,640 V799.5 M471.50,640 V799.5 M554.50,640 V799.5 M636.50,640 V799.5 M718.50,640 V799.5 M800.50,640 V799.5 M882.50,640 V799.5 M79,651.5 H906 M79,694.5 H906 M79,737.5 H906 M79,780.5 H906 " stroke="rgba(204,204,220,0.085)" stroke-width="1" fill="none"/><g clip-path="url(#clip0_591)"><path d="M83.00,779.64 L102.00,778.78 L143.10,780.50 L184.20,653.65 L225.30,657.74 L266.40,658.60 L307.50,715.57 L348.60,748.89 L389.70,755.77 L430.80,780.50 L471.90,780.50 L513.00,780.50 L554.10,772.54 L595.20,780.50 L636.30,780.50 L677.40,780.50 L718.50,780.50 L759.60,762.87 L800.70,666.98 L841.80,762.87 L882.90,780.50 L882.90,780.50 L841.80,780.50 L800.70,780.50 L759.60,780.50 L718.50,780.50 L677.40,780.50 L636.30,780.50 L595.20,780.50 L554.10,780.50 L513.00,780.50 L471.90,780.50 L430.80,780.50 L389.70,780.50 L348.60,780.50 L307.50,780.50 L266.40,780.50 L225.30,780.50 L184.20,780.50 L143.10,780.50 L102.00,780.50 L83.00,780.50Z" fill="#73BF69" fill-opacity="0.400"/><path d="M83.00,779.64 L102.00,778.78 L143.10,780.50 L184.20,653.65 L225.30,657.74 L266.40,658.60 L307.50,715.57 L348.60,748.89 L389.70,755.77 L430.80,780.50 L471.90,780.50 L513.00,780.50 L554.10,772.54 L595.20,780.50 L636.30,780.50 L677.40,780.50 L718.50,780.50 L759.60,762.87 L800.70,666.98 L841.80,762.87 L882.90,780.50" fill="none" stroke="#73BF69" stroke-width="1"/><path d="M83,780.5 H883" fill="none" stroke="#FF780A" stroke-width="1"/></g></svg><span class="t" style="left:9.70px;top:50.70px;font-size:12px;line-height:16px;letter-spacing:0.555px;color:#c2c3d1;">600 Mb/s</span><span class="t" style="left:9.70px;top:93.70px;font-size:12px;line-height:16px;letter-spacing:0.555px;color:#c2c3d1;">400 Mb/s</span><span class="t" style="left:9.70px;top:136.70px;font-size:12px;line-height:16px;letter-spacing:0.555px;color:#c2c3d1;">200 Mb/s</span><span class="t" style="left:35.14px;top:179.70px;font-size:12px;line-height:16px;letter-spacing:0.468px;color:#c2c3d1;">0 b/s</span><span class="t" style="left:108.50px;top:209.50px;font-size:12px;line-height:16px;letter-spacing:0.147px;color:#c2c3d1;">11:37:30</span><span class="t" style="left:190.50px;top:209.50px;font-size:12px;line-height:16px;letter-spacing:0.147px;color:#c2c3d1;">11:38:00</span><span class="t" style="left:272.50px;top:209.50px;font-size:12px;line-height:16px;letter-spacing:0.147px;color:#c2c3d1;">11:38:30</span><span class="t" style="left:354.50px;top:209.50px;font-size:12px;line-height:16px;letter-spacing:0.147px;color:#c2c3d1;">11:39:00</span><span class="t" style="left:436.50px;top:209.50px;font-size:12px;line-height:16px;letter-spacing:0.147px;color:#c2c3d1;">11:39:30</span><span class="t" style="left:519.50px;top:209.50px;font-size:12px;line-height:16px;letter-spacing:0.147px;color:#c2c3d1;">11:40:00</span><span class="t" style="left:601.50px;top:209.50px;font-size:12px;line-height:16px;letter-spacing:0.147px;color:#c2c3d1;">11:40:30</span><span class="t" style="left:683.50px;top:209.50px;font-size:12px;line-height:16px;letter-spacing:0.147px;color:#c2c3d1;">11:41:00</span><span class="t" style="left:765.50px;top:209.50px;font-size:12px;line-height:16px;letter-spacing:0.147px;color:#c2c3d1;">11:41:30</span><span class="t" style="left:847.50px;top:209.50px;font-size:12px;line-height:16px;letter-spacing:0.147px;color:#c2c3d1;">11:42:00</span><span class="sw" style="left:11.80px;top:237.00px;background:#73BF69"></span><span class="t" style="left:34.00px;top:231.20px;font-size:12px;line-height:16px;letter-spacing:0.738px;color:#c2c3d1;">recv eth0</span><span class="sw" style="left:99.10px;top:237.00px;background:#F2CC0C"></span><span class="t" style="left:121.30px;top:231.20px;font-size:12px;line-height:16px;letter-spacing:0.594px;color:#c2c3d1;">recv lo</span><span class="sw" style="left:170.20px;top:237.00px;background:#8AB8FF"></span><span class="t" style="left:192.40px;top:231.20px;font-size:12px;line-height:16px;letter-spacing:0.663px;color:#c2c3d1;">trans eth0</span><span class="sw" style="left:261.80px;top:237.00px;background:#FF780A"></span><span class="t" style="left:284.00px;top:231.20px;font-size:12px;line-height:16px;letter-spacing:0.519px;color:#c2c3d1;">trans lo</span></div>
<div class="panel" style="left:930.00px;top:591px;width:912.00px;height:258px"><div class="corner"></div><svg class="ci" width="4.700" height="8.600" viewBox="0 0 5.500 8.800" preserveAspectRatio="none"><path d="M1.600 0h2.400v2.200h-2.400zM.500 3.300h3.600v4h1.400v1.500h-5.500v-1.500h1.500v-2.500h-1z"/></svg><span class="t" style="left:379.20px;top:8.30px;font-size:14px;line-height:18px;letter-spacing:0.300px;color:#ccccdc;-webkit-text-stroke:0.300px #ccccdc;">Disk Space Used Basic</span><svg class="plot" width="912.00" height="258" viewBox="930.00 591 912.00 258" shape-rendering="auto"><defs><clipPath id="clip12_591"><rect x="979" y="640.5" width="846.5" height="134.5"/></clipPath></defs><path d="M1041.50,640 V776.0 M1125.50,640 V776.0 M1210.50,640 V776.0 M1295.50,640 V776.0 M1379.50,640 V776.0 M1464.50,640 V776.0 M1548.50,640 V776.0 M1633.50,640 V776.0 M1718.50,640 V776.0 M1802.50,640 V776.0 M975,640.5 H1825.5 M975,673.5 H1825.5 M975,706.5 H1825.5 M975,738.5 H1825.5 M975,771.5 H1825.5 " stroke="rgba(204,204,220,0.085)" stroke-width="1" fill="none"/><g clip-path="url(#clip12_591)"><rect x="956.40" y="716" width="846.50" height="56.00" fill="#925236"/><rect x="956.40" y="765" width="846.50" height="7.00" fill="#5f4b50"/><path d="M956.40,716.50 L998.73,716.50 L1041.05,716.50 L1083.38,710.20 L1125.70,704.40 L1168.03,697.50 L1210.35,680.20 L1252.68,692.60 L1295.00,690.50 L1337.33,690.40 L1379.65,690.40 L1421.98,690.40 L1464.30,690.40 L1506.62,690.40 L1548.95,690.40 L1591.28,690.40 L1633.60,690.40 L1675.93,689.40 L1718.25,683.40 L1760.58,682.50 L1802.90,682.40 L1802.90,716.50 L1760.58,716.50 L1718.25,716.50 L1675.93,716.50 L1633.60,716.50 L1591.28,716.50 L1548.95,716.50 L1506.62,716.50 L1464.30,716.50 L1421.98,716.50 L1379.65,716.50 L1337.33,716.50 L1295.00,716.50 L1252.68,716.50 L1210.35,716.50 L1168.03,716.50 L1125.70,716.50 L1083.38,716.50 L1041.05,716.50 L998.73,716.50 L956.40,716.50Z" fill="#C15C17" fill-opacity="0.400"/><path d="M956.40,716.50 L998.73,716.50 L1041.05,716.50 L1083.38,710.20 L1125.70,704.40 L1168.03,697.50 L1210.35,680.20 L1252.68,692.60 L1295.00,690.50 L1337.33,690.40 L1379.65,690.40 L1421.98,690.40 L1464.30,690.40 L1506.62,690.40 L1548.95,690.40 L1591.28,690.40 L1633.60,690.40 L1675.93,689.40 L1718.25,683.40 L1760.58,682.50 L1802.90,682.40" fill="none" stroke="#cc641a" stroke-width="1.100"/><path d="M956.40,716.5 H1802.90" fill="none" stroke="#978e9b" stroke-width="1"/><path d="M979.00,716.5 H1041.05" fill="none" stroke="#3f86d2" stroke-width="1"/><path d="M956.40,717.5 H1802.90" fill="none" stroke="#b9874f" stroke-width="1"/><path d="M979.00,717.5 H1041.05" fill="none" stroke="#c4500c" stroke-width="1"/><path d="M956.40,718.5 H1802.90" fill="none" stroke="#8c1204" stroke-width="1"/><path d="M956.40,764.5 H1802.90" fill="none" stroke="#0f4580" stroke-width="1"/><path d="M956.40,771.5 H1802.90" fill="none" stroke="#80486a" stroke-width="1"/></g></svg><span class="t" style="left:8.92px;top:39.90px;font-size:12px;line-height:16px;letter-spacing:-0.153px;color:#c2c3d1;">100%</span><span class="t" style="left:15.46px;top:72.70px;font-size:12px;line-height:16px;letter-spacing:-0.160px;color:#c2c3d1;">75%</span><span class="t" style="left:15.46px;top:105.50px;font-size:12px;line-height:16px;letter-spacing:-0.160px;color:#c2c3d1;">50%</span><span class="t" style="left:15.46px;top:138.20px;font-size:12px;line-height:16px;letter-spacing:-0.160px;color:#c2c3d1;">25%</span><span class="t" style="left:22.00px;top:171.00px;font-size:12px;line-height:16px;letter-spacing:-0.173px;color:#c2c3d1;">0%</span><span class="t" style="left:86.50px;top:186.00px;font-size:12px;line-height:16px;letter-spacing:0.147px;color:#c2c3d1;">11:37:30</span><span class="t" style="left:170.50px;top:186.00px;font-size:12px;line-height:16px;letter-spacing:0.147px;color:#c2c3d1;">11:38:00</span><span class="t" style="left:255.50px;top:186.00px;font-size:12px;line-height:16px;letter-spacing:0.147px;color:#c2c3d1;">11:38:30</span><span class="t" style="left:340.50px;top:186.00px;font-size:12px;line-height:16px;letter-spacing:0.147px;color:#c2c3d1;">11:39:00</span><span class="t" style="left:424.50px;top:186.00px;font-size:12px;line-height:16px;letter-spacing:0.147px;color:#c2c3d1;">11:39:30</span><span class="t" style="left:509.50px;top:186.00px;font-size:12px;line-height:16px;letter-spacing:0.147px;color:#c2c3d1;">11:40:00</span><span class="t" style="left:593.50px;top:186.00px;font-size:12px;line-height:16px;letter-spacing:0.147px;color:#c2c3d1;">11:40:30</span><span class="t" style="left:678.50px;top:186.00px;font-size:12px;line-height:16px;letter-spacing:0.147px;color:#c2c3d1;">11:41:00</span><span class="t" style="left:763.50px;top:186.00px;font-size:12px;line-height:16px;letter-spacing:0.147px;color:#c2c3d1;">11:41:30</span><span class="t" style="left:847.50px;top:186.00px;font-size:12px;line-height:16px;letter-spacing:0.147px;color:#c2c3d1;">11:42:00</span><span class="sw" style="left:11.80px;top:213.00px;background:#73BF69"></span><span class="t" style="left:34.00px;top:207.20px;font-size:12px;line-height:16px;letter-spacing:0.811px;color:#c2c3d1;">/boot/efi</span><span class="sw" style="left:93.30px;top:213.00px;background:#F2CC0C"></span><span class="t" style="left:115.50px;top:207.20px;font-size:12px;line-height:16px;letter-spacing:0.666px;color:#c2c3d1;">/</span><span class="sw" style="left:130.30px;top:213.00px;background:#8AB8FF"></span><span class="t" style="left:152.50px;top:207.20px;font-size:12px;line-height:16px;letter-spacing:0.512px;color:#c2c3d1;">/.snapshots</span><span class="sw" style="left:229.30px;top:213.00px;background:#FF780A"></span><span class="t" style="left:251.50px;top:207.20px;font-size:12px;line-height:16px;letter-spacing:0.900px;color:#c2c3d1;">/boot/grub2/i386-pc</span><span class="sw" style="left:380.80px;top:213.00px;background:#F2495C"></span><span class="t" style="left:403.00px;top:207.20px;font-size:12px;line-height:16px;letter-spacing:0.769px;color:#c2c3d1;">/boot/grub2/x86_64-efi</span><span class="sw" style="left:548.80px;top:213.00px;background:#5794F2"></span><span class="t" style="left:571.00px;top:207.20px;font-size:12px;line-height:16px;letter-spacing:0.730px;color:#c2c3d1;">/home</span><span class="sw" style="left:617.80px;top:213.00px;background:#B877D9"></span><span class="t" style="left:640.00px;top:207.20px;font-size:12px;line-height:16px;letter-spacing:0.871px;color:#c2c3d1;">/opt</span><span class="sw" style="left:673.30px;top:213.00px;background:#705DA0"></span><span class="t" style="left:695.50px;top:207.20px;font-size:12px;line-height:16px;letter-spacing:0.798px;color:#c2c3d1;">/root</span><span class="sw" style="left:733.30px;top:213.00px;background:#37872D"></span><span class="t" style="left:755.50px;top:207.20px;font-size:12px;line-height:16px;letter-spacing:0.667px;color:#c2c3d1;">/srv</span><span class="sw" style="left:788.80px;top:213.00px;background:#FADE2A"></span><span class="t" style="left:811.00px;top:207.20px;font-size:12px;line-height:16px;letter-spacing:0.916px;color:#c2c3d1;">/tmp</span><span class="sw" style="left:11.80px;top:237.00px;background:#447EBC"></span><span class="t" style="left:34.00px;top:231.20px;font-size:12px;line-height:16px;letter-spacing:0.548px;color:#c2c3d1;">/usr/local</span><span class="sw" style="left:96.80px;top:237.00px;background:#C15C17"></span><span class="t" style="left:119.00px;top:231.20px;font-size:12px;line-height:16px;letter-spacing:0.597px;color:#c2c3d1;">/vastorage</span><span class="sw" style="left:190.30px;top:237.00px;background:#890F02"></span><span class="t" style="left:212.50px;top:231.20px;font-size:12px;line-height:16px;letter-spacing:0.374px;color:#c2c3d1;">/var</span><span class="sw" style="left:245.30px;top:237.00px;background:#0A437C"></span><span class="t" style="left:267.50px;top:231.20px;font-size:12px;line-height:16px;letter-spacing:0.581px;color:#c2c3d1;">/run</span><span class="sw" style="left:300.80px;top:237.00px;background:#6D1F62"></span><span class="t" style="left:323.00px;top:231.20px;font-size:12px;line-height:16px;letter-spacing:0.603px;color:#c2c3d1;">/run/user/0</span></div>
<div class="panel" style="left:10px;top:857px;width:1831.00px;height:40px;border-color:#1b1e23"></div>
</div></body></html>
